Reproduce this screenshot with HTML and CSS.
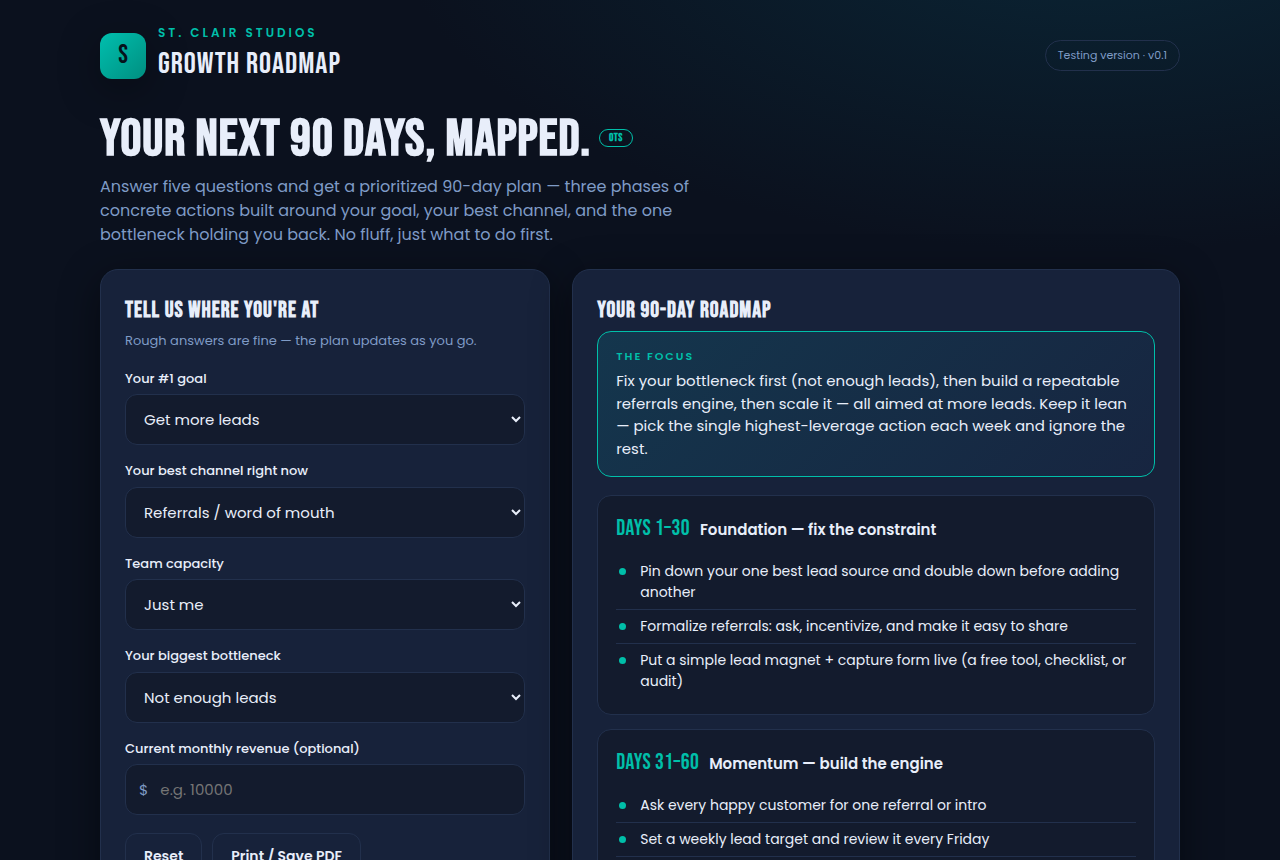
FILE: index.html
```html
<!DOCTYPE html>
<html lang="en">
<head>
<meta charset="utf-8">
<meta name="viewport" content="width=device-width, initial-scale=1">
<title>Growth Roadmap — St. Clair Studios</title>
<link rel="stylesheet" href="styles.css">
</head>
<body>
<div class="wrap">
  <header class="topbar">
    <div class="brand">
      <div class="brand-mark" aria-hidden="true">S</div>
      <div class="brand-text">
        <span class="brand-eyebrow">ST. CLAIR STUDIOS</span>
        <span class="brand-name">GROWTH ROADMAP</span>
      </div>
    </div>
    <span class="version">Testing version · v0.1</span>
  </header>

  <main>
    <section class="hero">
      <h1 class="hero-title">YOUR NEXT 90 DAYS, MAPPED. <span class="tag">OTS</span></h1>
      <p class="lead">Answer five questions and get a prioritized 90-day plan — three phases of concrete actions built around your goal, your best channel, and the one bottleneck holding you back. No fluff, just what to do first.</p>
    </section>

    <div class="columns">
      <form class="card">
        <h2 class="card-title">TELL US WHERE YOU'RE AT</h2>
        <p class="hint">Rough answers are fine — the plan updates as you go.</p>
        <div class="field">
          <label for="goal">Your #1 goal</label>
          <select id="goal" class="control"><option>Get more leads</option></select>
        </div>
        <div class="field">
          <label for="channel">Your best channel right now</label>
          <select id="channel" class="control"><option>Referrals / word of mouth</option></select>
        </div>
        <div class="field">
          <label for="team">Team capacity</label>
          <select id="team" class="control"><option>Just me</option></select>
        </div>
        <div class="field">
          <label for="bottleneck">Your biggest bottleneck</label>
          <select id="bottleneck" class="control"><option>Not enough leads</option></select>
        </div>
        <div class="field">
          <label for="revenue">Current monthly revenue (optional)</label>
          <div class="control money">
            <span class="currency">$</span>
            <input id="revenue" class="money-input" type="text" inputmode="numeric" placeholder="e.g. 10000">
          </div>
        </div>
        <div class="actions">
          <button class="btn" type="reset">Reset</button>
          <button class="btn" type="button">Print / Save PDF</button>
        </div>
      </form>

      <section class="card">
        <h2 class="card-title">YOUR 90-DAY ROADMAP</h2>
        <div class="focus">
          <div class="focus-label">THE FOCUS</div>
          <p class="focus-text">Fix your bottleneck first (not enough leads), then build a repeatable referrals engine, then scale it — all aimed at more leads. Keep it lean — pick the single highest-leverage action each week and ignore the rest.</p>
        </div>
        <article class="phase">
          <h3 class="phase-head"><span class="phase-days">DAYS 1–30</span><span class="phase-name">Foundation — fix the constraint</span></h3>
          <ul class="steps">
            <li>Pin down your one best lead source and double down before adding another</li>
            <li>Formalize referrals: ask, incentivize, and make it easy to share</li>
            <li>Put a simple lead magnet + capture form live (a free tool, checklist, or audit)</li>
          </ul>
        </article>
        <article class="phase">
          <h3 class="phase-head"><span class="phase-days">DAYS 31–60</span><span class="phase-name">Momentum — build the engine</span></h3>
          <ul class="steps">
            <li>Ask every happy customer for one referral or intro</li>
            <li>Set a weekly lead target and review it every Friday</li>
            <li></li>
          </ul>
        </article>
      </section>
    </div>
  </main>
</div>
</body>
</html>
```
FILE: styles.css
```css
:root {
  --bg: #0b111e;
  --card: #17223a;
  --panel: #131b2d;
  --line: #22304c;
  --text: #e8eefa;
  --muted: #7f9bc6;
  --teal: #00bfa9;
  --body-font: Poppins, Inter, "Open Sans", sans-serif;
  --display-font: "Bebas Neue", "Roboto Condensed", "Liberation Sans Narrow", "DejaVu Sans Condensed", sans-serif;
}
* { box-sizing: border-box; }
html { background: var(--bg); }
body {
  margin: 0;
  min-height: 100vh;
  color: var(--text);
  font-family: var(--body-font);
  font-size: 16px;
  line-height: 1.5;
  background: radial-gradient(1000px 500px at 85% -10%, #0a2636 0%, rgba(10, 38, 54, 0) 70%), var(--bg);
}
h1, h2, h3, p, ul { margin: 0; padding: 0; }
.wrap { max-width: 1128px; margin: 0 auto; padding: 24px 24px 60px; }
.topbar { display: flex; align-items: center; justify-content: space-between; height: 63px; }
.brand { display: flex; align-items: center; gap: 12px; }
.brand-mark {
  display: grid;
  place-items: center;
  width: 46px;
  height: 46px;
  border-radius: 12px;
  background: linear-gradient(135deg, #00bfae, #008f80);
  color: #06121a;
  font: 26px/1 var(--display-font);
  box-shadow: 0 10px 40px rgba(0, 0, 0, .35);
}
.brand-text { display: flex; flex-direction: column; }
.brand-eyebrow { color: var(--teal); font-size: 12px; line-height: 18px; font-weight: 600; letter-spacing: 3px; }
.brand-name { font: 30px/45px var(--display-font); letter-spacing: 1px; }
.version { padding: 6px 12px; border: 1px solid var(--line); border-radius: 999px; color: var(--muted); font-size: 11px; line-height: 17px; }
.hero { padding: 24px 0 22px; }
.hero-title { display: flex; align-items: center; gap: 8px; font: bold 52px/58px var(--display-font); letter-spacing: 1px; }
.tag { margin-bottom: 4px; border: 1px solid var(--teal); border-radius: 999px; padding: 0 9px; color: var(--teal); font-size: 11px; line-height: 16px; letter-spacing: .5px; }
.lead { max-width: 620px; margin-top: 6px; color: var(--muted); }
.columns { display: grid; grid-template-columns: 1fr 1.35fr; gap: 22px; align-items: start; }
.card { min-width: 0; padding: 24px; background: var(--card); border: 1px solid var(--line); border-radius: 18px; box-shadow: 0 10px 40px rgba(0, 0, 0, .45); }
.card-title { font: bold 22px/33px var(--display-font); letter-spacing: 1px; margin-bottom: 4px; }
.hint { color: var(--muted); font-size: 13px; margin-bottom: 18px; }
.field { margin-bottom: 16px; }
.field label { display: block; margin-bottom: 6px; font-size: 13px; font-weight: 500; }
.control {
  display: block;
  width: 100%;
  height: 51px;
  padding: 0 14px;
  border: 1px solid var(--line);
  border-radius: 12px;
  background: var(--panel);
  color: var(--text);
  font: 15px/22px var(--body-font);
}
select.control { padding: 0 0 0 14px; }
.money { display: flex; align-items: center; gap: 12px; padding: 0 13px; }
.currency { color: var(--muted); }
.money-input { flex: 1; min-width: 0; padding: 0; border: 0; outline: 0; background: transparent; color: inherit; font: inherit; }
.money-input::placeholder { color: #757575; }
.actions { display: flex; gap: 10px; margin-top: 18px; }
.btn { height: 46px; padding: 0 18px; border: 1px solid var(--line); border-radius: 12px; background: transparent; color: var(--text); font: 600 14px/21px var(--body-font); }
.focus { padding: 16px 18px; border: 1px solid var(--teal); border-radius: 14px; background: linear-gradient(135deg, #14364d, #172540); }
.focus-label { color: var(--teal); font-size: 11px; line-height: 17px; font-weight: 600; letter-spacing: 2px; margin-bottom: 5px; }
.focus-text { font-size: 15px; }
.phase { margin-top: 14px; padding: 16px 18px; border: 1px solid var(--line); border-radius: 14px; background: var(--panel); }
.focus + .phase { margin-top: 18px; }
.phase-head { display: flex; align-items: baseline; gap: 10px; margin-bottom: 10px; font-size: 15px; font-weight: 600; }
.phase-days { color: var(--teal); font: 22px/33px var(--display-font); letter-spacing: .02em; }
.steps { list-style: none; }
.steps li { display: flex; padding: 6px 0; font-size: 14px; border-bottom: 1px solid var(--line); }
.steps li:last-child { border-bottom: 0; }
.steps li::before { content: ""; flex: none; width: 7px; height: 7px; margin: 7px 14px 0 3px; border-radius: 50%; background: var(--teal); }
```
